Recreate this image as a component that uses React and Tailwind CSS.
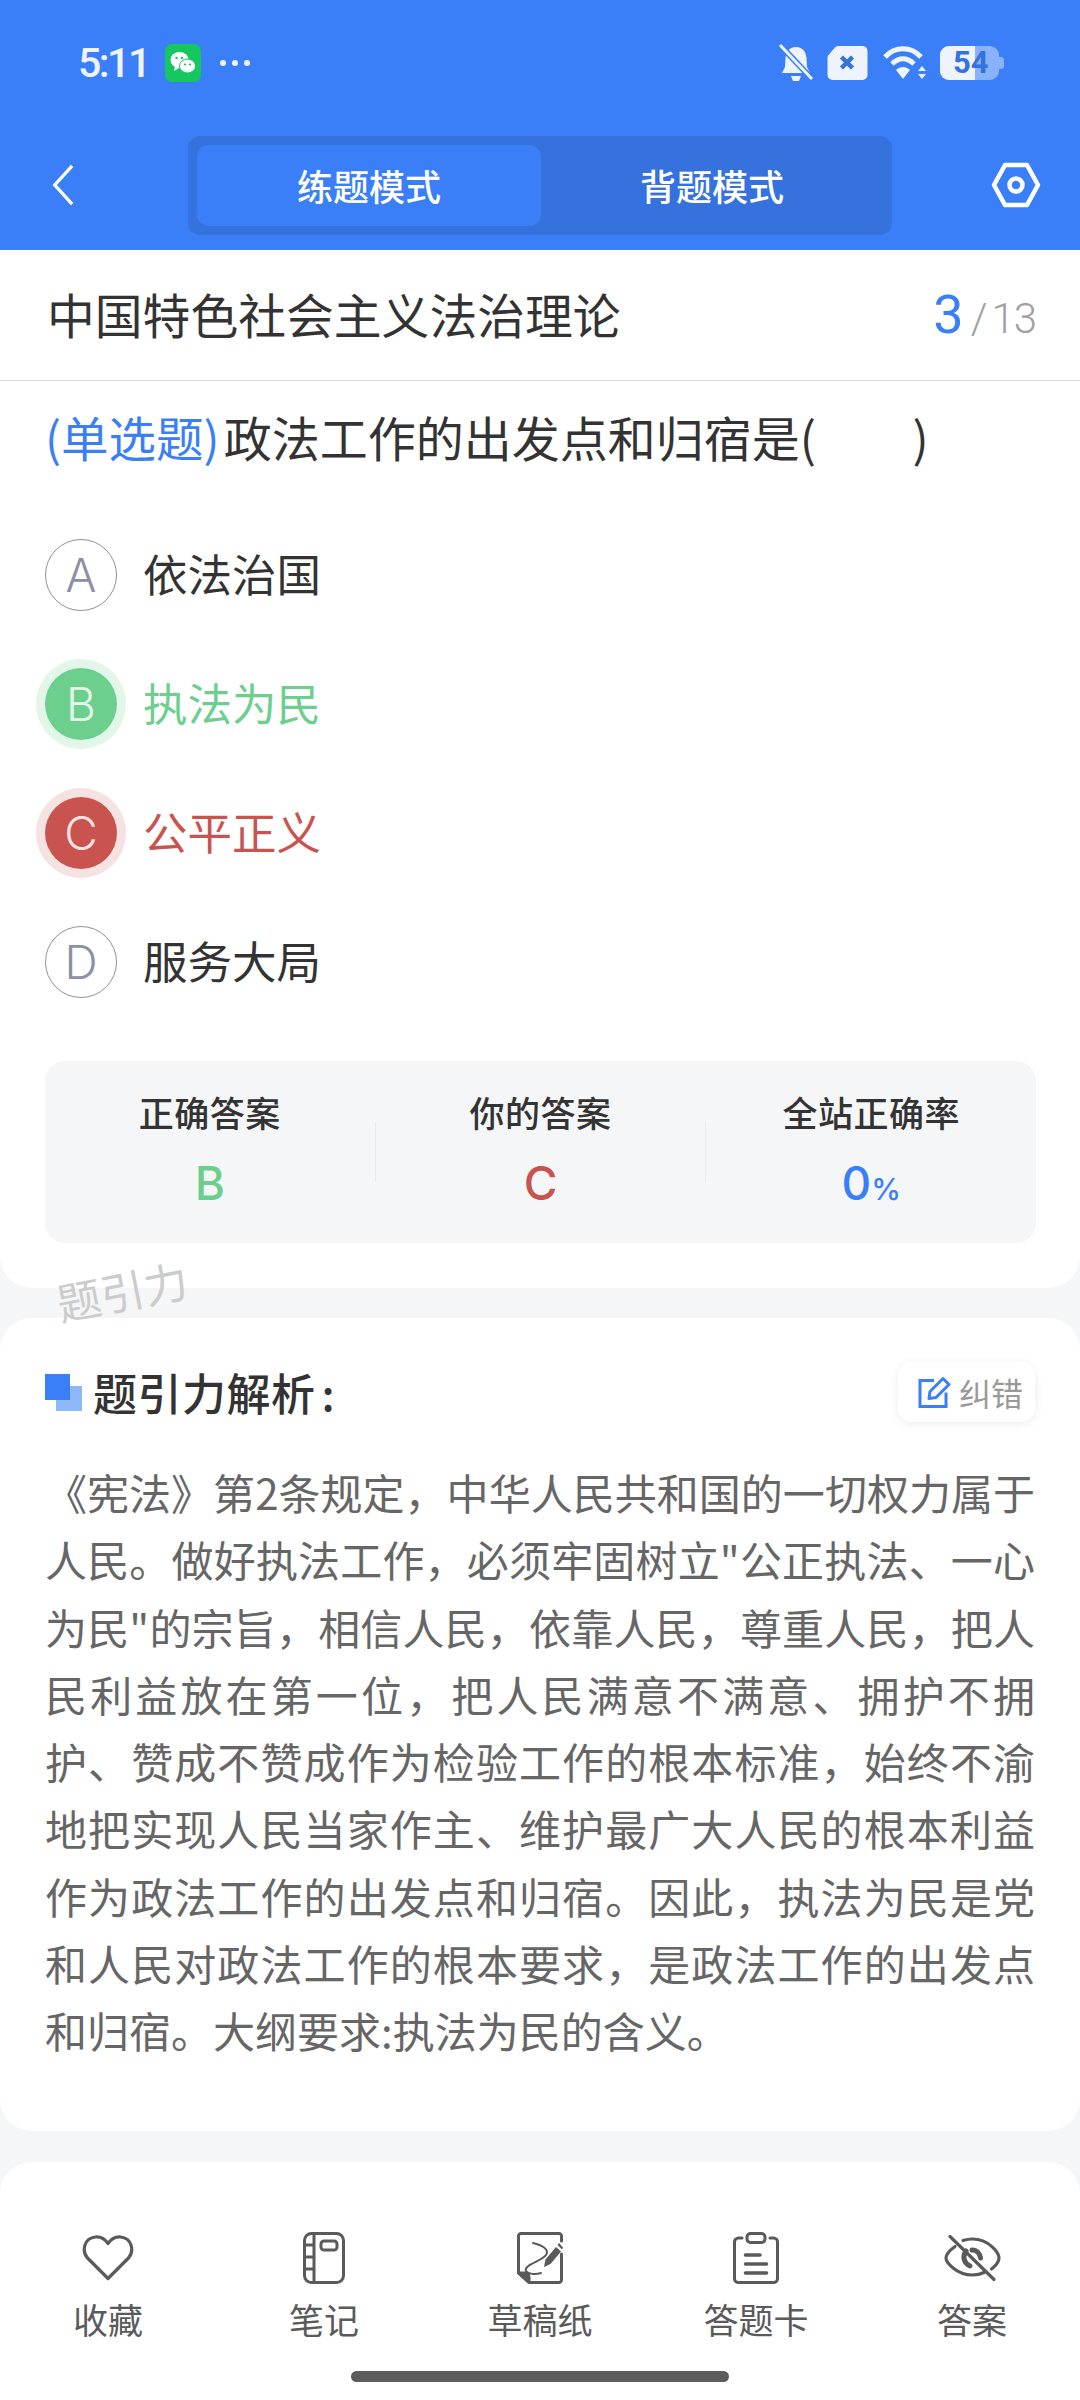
import React from "react";

const lines = [
  "《宪法》第2条规定，中华人民共和国的一切权力属于",
  "人民。做好执法工作，必须牢固树立\"公正执法、一心",
  "为民\"的宗旨，相信人民，依靠人民，尊重人民，把人",
  "民利益放在第一位，把人民满意不满意、拥护不拥",
  "护、赞成不赞成作为检验工作的根本标准，始终不渝",
  "地把实现人民当家作主、维护最广大人民的根本利益",
  "作为政法工作的出发点和归宿。因此，执法为民是党",
  "和人民对政法工作的根本要求，是政法工作的出发点",
];

const Heart = () => (
  <svg width="52" height="46" viewBox="0 0 52 46" fill="none" stroke="#5a5a5a" strokeWidth="3.2" strokeLinejoin="round">
    <path d="M26 43.5 L5.5 23 C-0.5 16 2 3 13.5 2 C19 1.6 23 4.2 26 8.5 C29 4.2 33 1.6 38.5 2 C50 3 52.5 16 46.5 23 Z" />
  </svg>
);
const Notebook = () => (
  <svg width="42" height="52" viewBox="0 0 42 52" fill="none" stroke="#5a5a5a" strokeWidth="3">
    <rect x="1.5" y="1.5" width="39" height="49" rx="7" />
    <path d="M11 2v48M2 13h9M2 25h9M2 37h9" />
    <rect x="18" y="9" width="16" height="9" rx="3" />
  </svg>
);
const Draft = () => (
  <svg width="46" height="52" viewBox="0 0 46 52" fill="none" stroke="#5a5a5a" strokeWidth="3" strokeLinejoin="round" strokeLinecap="round">
    <path d="M44.5 9V4a2.500 2.500 0 0 0-2.500-2.500H4A2.500 2.500 0 0 0 1.500 4V41L12 50.500H42a2.500 2.500 0 0 0 2.500-2.500V22" />
    <path d="M1.500 41H8a4 4 0 0 1 4 4v5.500Z" fill="#5a5a5a" />
    <path d="M16 11 C24 13 33 17 29 23 C25 29 6 33 9 39 C11 42 18 43 24 41" strokeWidth="2" />
    <path d="M27 35 L28.500 27.500 L39 15 L44 19.500 L33.500 32 Z" fill="#5a5a5a" stroke="none" />
    <path d="M40.500 13 L42 11 L46 15.500 L45 17.500 Z" fill="#5a5a5a" stroke="none" />
  </svg>
);
const Clip = () => (
  <svg width="46" height="52" viewBox="0 0 46 52" fill="none" stroke="#5a5a5a" strokeWidth="3" strokeLinecap="round">
    <path d="M9 6H5.500A4 4 0 0 0 1.500 10V46.500A4 4 0 0 0 5.500 50.500H40.500A4 4 0 0 0 44.500 46.500V10A4 4 0 0 0 40.500 6H37" />
    <rect x="14" y="1.500" width="18" height="9" rx="3.500" />
    <path d="M12.500 23H27M12.500 32H33.500M12.500 41H33.500" strokeWidth="3.600" />
  </svg>
);
const Eye = () => (
  <svg width="57" height="46" viewBox="0 0 57 46" fill="none" stroke="#5a5a5a" strokeWidth="3.200" strokeLinecap="round" strokeLinejoin="round">
    <path d="M11 11.500 C5.500 15.500 2 20 2 23 C2 27 12 40 28.500 40 C33 40 37 39 40 37.500" />
    <path d="M19 5.500 C22 4.500 25 4 28.500 4 C45 4 55 18 55 23 C55 26 52 30.500 47.500 34" />
    <path d="M6 1.500 L50 44.500" />
    <path d="M22 16 C18 22 20 28 26 31 M28 15 C33 15 36 19 36.500 23" strokeWidth="5" />
  </svg>
);

const Option = ({ letter, text, tone }) => {
  const circle =
    tone === "green"
      ? "bg-[#6ccf8e] text-[#e4f7eb] ring-[9px] ring-[#e3f6ea]"
      : tone === "red"
      ? "bg-[#c9544f] text-[#f8e3e2] ring-[9px] ring-[#f5e3e3]"
      : "border-[1.5px] border-[#8d90a4] text-[#8d90a4]";
  const label = tone === "green" ? "text-[#6ccf8e]" : tone === "red" ? "text-[#c9544f]" : "text-[#333333]";
  return (
    <div className="flex items-center h-[129px] pl-[45px]">
      <div className={`w-[72px] h-[72px] rounded-full flex items-center justify-center text-[46px] font-[350] font-['Inter',sans-serif] ${circle}`}>{letter}</div>
      <div className={`ml-[26px] pb-[3px] text-[44.500px] ${label}`}>{text}</div>
    </div>
  );
};

const Stat = ({ title, children }) => (
  <div className="flex-1 flex flex-col items-center pt-[31px]">
    <div className="text-[35px] leading-[40px] font-medium text-[#333333] tracking-[0.5px]">{title}</div>
    {children}
  </div>
);

const Nav = ({ icon, label }) => (
  <div className="flex flex-col items-center">
    <div className="h-[56px] flex items-center justify-center">{icon}</div>
    <div className="mt-[11px] text-[35px] leading-[44px] text-[#5a5a5a]">{label}</div>
  </div>
);

export default function App() {
  return (
    <div className="relative w-[1080px] h-[2400px] overflow-hidden bg-[#f5f6f8] flex flex-col font-['Noto_Sans_CJK_SC','Noto_Sans',sans-serif]">
      <header className="h-[250px] shrink-0 bg-[#3b7ff8] flex flex-col">
        <div className="h-[124px] pt-[2px] flex items-center pl-[78px] pr-[76px] text-[#eef3fe]">
          <span className="text-[41px] font-medium font-['Roboto',sans-serif] leading-none tracking-[-2.500px]">5:11</span>
          <div className="ml-[16px] w-[36px] h-[38px] rounded-[7px] bg-[#16c75f] flex items-center justify-center">
            <svg width="28" height="28" viewBox="0 0 28 28">
              <ellipse cx="10.500" cy="11" rx="9" ry="8" fill="#fff" />
              <path d="M6 17l-1 5 5-3z" fill="#fff" />
              <ellipse cx="18.500" cy="17" rx="8" ry="7" fill="#fff" stroke="#16c75f" strokeWidth="1" />
              <circle cx="7.500" cy="9" r="1.200" fill="#16c75f" />
              <circle cx="13" cy="9" r="1.200" fill="#16c75f" />
              <circle cx="16" cy="15.500" r="1.100" fill="#16c75f" />
              <circle cx="21" cy="15.500" r="1.100" fill="#16c75f" />
            </svg>
          </div>
          <div className="ml-[19px] flex gap-[6px]">
            <span className="w-[6px] h-[6px] rounded-full bg-[#eef3fe]" />
            <span className="w-[6px] h-[6px] rounded-full bg-[#eef3fe]" />
            <span className="w-[6px] h-[6px] rounded-full bg-[#eef3fe]" />
          </div>
          <div className="ml-auto flex items-center">
            <svg width="36" height="40" viewBox="0 0 36 38">
              <path d="M18 3c7 0 10 5 10.500 11l.5 9 3 6H4l3-6 .5-9C8 8 11 3 18 3z" fill="#eef3fe" />
              <path d="M13 32h10l-2 5h-6z" fill="#eef3fe" />
              <path d="M3 2L34 35" stroke="#3b7ff8" strokeWidth="6" />
              <path d="M2 1L34 35" stroke="#eef3fe" strokeWidth="3" />
            </svg>
            <svg className="ml-[11px]" width="44" height="36" viewBox="0 0 43 36">
              <path d="M12 1h25a5 5 0 0 1 5 5v24a5 5 0 0 1-5 5H7a5 5 0 0 1-5-5V13a5 5 0 0 1 1.500-3.500L9 3c1-1.300 2-2 3-2z" fill="#eef3fe" />
              <path d="M16 12l11 11M27 12L16 23" stroke="#3572dd" strokeWidth="4.500" />
            </svg>
            <svg className="ml-[13px]" width="46" height="36" viewBox="0 0 46 36">
              <path d="M3 12C13 1 29 1 39 12" fill="none" stroke="#eef3fe" strokeWidth="5" />
              <path d="M10 19C17 12 25 12 32 19" fill="none" stroke="#eef3fe" strokeWidth="5" />
              <path d="M14 25C18 21 24 21 28 25L21 34z" fill="#eef3fe" />
              <path d="M36 26l4-5 4 5zM36 29l4 5 4-5z" fill="#eef3fe" />
            </svg>
            <div className="relative ml-[12px] w-[64px] h-[34px]">
              <div className="absolute left-0 top-0 w-[59px] h-[34px] rounded-[9px] bg-[#8ab2fa]" />
              <div className="absolute right-0 top-[11px] w-[5px] h-[12px] rounded-r-[3px] bg-[#8ab2fa]" />
              <div className="absolute left-0 top-0 w-[35px] h-[34px] rounded-l-[9px] bg-[#eef3fe]" />
              <div className="absolute left-[13px] top-0 h-[34px] leading-[34px] text-[31px] font-bold font-['Roboto',sans-serif] text-[#3572dd]">54</div>
            </div>
          </div>
        </div>
        <div className="flex-1 relative flex justify-center pt-[12px]">
          <svg className="absolute left-[50px] top-[40px]" width="26" height="42" viewBox="0 0 26 46" fill="none" stroke="#fff" strokeWidth="3.600">
            <path d="M23 2L4 23l19 21" />
          </svg>
          <div className="w-[704px] h-[99px] rounded-[12px] bg-[#3572dd] p-[9px] flex text-white text-[36px] font-medium">
            <div className="w-[344px] h-[81px] rounded-[12px] bg-[#3b7ff8] flex items-center justify-center pb-[2px]">练题模式</div>
            <div className="flex-1 flex items-center justify-center pb-[2px]">背题模式</div>
          </div>
          <svg className="absolute left-[991px] top-[38px]" width="50" height="46" viewBox="0 0 50 46" fill="none" stroke="#fff" strokeWidth="4.500">
            <path d="M14 3h22l11 20-11 20H14L3 23z" strokeLinejoin="round" />
            <circle cx="25" cy="23" r="6.500" />
          </svg>
        </div>
      </header>

      <section className="h-[1038px] shrink-0 bg-white rounded-b-[32px] flex flex-col">
        <div className="h-[131px] shrink-0 pb-[2px] border-b-[1.5px] border-[#dcdcdc] flex items-center justify-between pl-[47px] pr-[44px]">
          <div className="text-[47.800px] text-[#333333]">中国特色社会主义法治理论</div>
          <div className="flex items-baseline text-[#a0a0a0] text-[42px] font-light font-['Roboto',sans-serif]">
            <span className="text-[54px] text-[#3b7ff8] font-normal">3</span>
            <span className="ml-[7px]">/</span>
            <span className="ml-[4px] tracking-[-1px]">13</span>
          </div>
        </div>
        <div className="pl-[45px] pt-[22px] h-[129.500px] shrink-0 text-[48px] leading-[66px] text-[#333333] whitespace-pre">
          <span className="text-[#3b7ff8] text-[47.500px] mr-[4px]">(单选题)</span>政法工作的出发点和归宿是(         )
        </div>
        <div className="flex flex-col">
          <Option letter="A" text="依法治国" />
          <Option letter="B" text="执法为民" tone="green" />
          <Option letter="C" text="公平正义" tone="red" />
          <Option letter="D" text="服务大局" />
        </div>
        <div className="ml-[45px] mr-[44px] mt-[34.500px] h-[182px] rounded-[20px] bg-[#f5f6f8] flex items-stretch">
          <Stat title="正确答案"><div className="mt-[23px] text-[46px] leading-[56px] font-[550] font-['Inter',sans-serif] text-[#6ccf8e]">B</div></Stat>
          <div className="w-px h-[60px] bg-[#e9eaec] self-center" />
          <Stat title="你的答案"><div className="mt-[23px] text-[46px] leading-[56px] font-[550] font-['Inter',sans-serif] text-[#c9544f]">C</div></Stat>
          <div className="w-px h-[60px] bg-[#e9eaec] self-center" />
          <Stat title="全站正确率">
            <div className="mt-[23px] text-[46px] leading-[56px] font-[550] font-['Inter',sans-serif] text-[#3b7ff8]">0<span className="text-[30px] font-medium">%</span></div>
          </Stat>
        </div>
      </section>

      <section className="mt-[30px] h-[813px] shrink-0 bg-white rounded-[32px] flex flex-col">
        <div className="mt-[44px] h-[60px] flex items-center justify-between pl-[45px] pr-[45px]">
          <div className="flex items-center">
            <div className="relative w-[37px] h-[37px]">
              <div className="absolute left-[11px] top-[12px] w-[26px] h-[25px] bg-[#8fb8fb]" />
              <div className="absolute left-0 top-0 w-[25px] h-[26px] bg-[#3b7ff8]" />
            </div>
            <div className="ml-[11px] text-[44px] font-medium text-[#333333] tracking-[0.5px]">题引力解析<span className="ml-[6px]">:</span></div>
          </div>
          <div className="w-[137px] h-[60px] rounded-[14px] bg-white shadow-[0_2px_10px_rgba(0,0,0,0.08)] flex items-center pl-[20px] gap-[8px]">
            <svg width="33" height="33" viewBox="0 0 33 32" fill="none" stroke="#3b7ff8" strokeWidth="3">
              <path d="M16 4H2v26h26V16" />
              <path d="M11 22l1-7L25 2l6 6-13 13z" strokeLinejoin="round" />
            </svg>
            <span className="text-[32px] text-[#999999]">纠错</span>
          </div>
        </div>
        <div className="mt-[36px] px-[45px] text-[42px] leading-[67.300px] text-[#666666]">
          {lines.map((l) => (
            <div key={l} className="[text-align-last:justify] whitespace-nowrap">{l}</div>
          ))}
          <div>和归宿。大纲要求:执法为民的含义。</div>
        </div>
      </section>

      <nav className="mt-[31px] flex-1 bg-white rounded-t-[32px] pt-[68px] grid grid-cols-5 content-start">
        <Nav icon={<Heart />} label="收藏" />
        <Nav icon={<Notebook />} label="笔记" />
        <Nav icon={<Draft />} label="草稿纸" />
        <Nav icon={<Clip />} label="答题卡" />
        <Nav icon={<Eye />} label="答案" />
      </nav>

      <div className="absolute left-[351px] top-[2371px] w-[378px] h-[11px] rounded-full bg-[#5c5c5c]" />
      <div className="absolute left-[56px] top-[1268px] text-[44px] text-[#cccccc] -rotate-[11deg] leading-none">题引力</div>
    </div>
  );
}
